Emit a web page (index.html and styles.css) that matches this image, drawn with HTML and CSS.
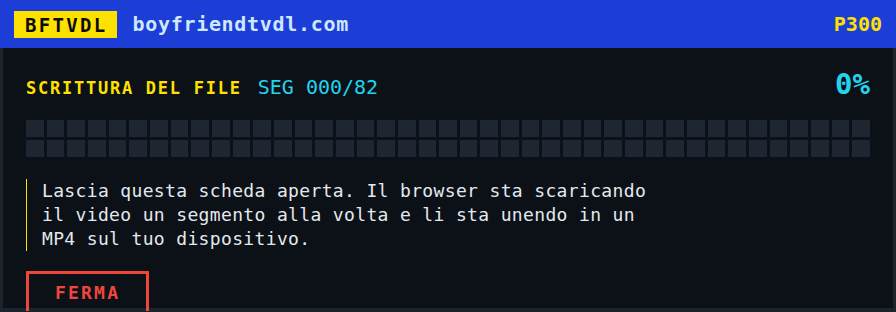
FILE: index.html
```html
<!DOCTYPE html>
<html lang="it">
<head>
<meta charset="utf-8">
<title>BFTVDL</title>
<link rel="stylesheet" href="styles.css">
</head>
<body>
<header class="topbar">
  <div class="brand">
    <span class="badge">BFTVDL</span>
    <span class="domain">boyfriendtvdl.com</span>
  </div>
  <span class="code">P300</span>
</header>
<main class="panel">
  <div class="status">
    <span class="label">SCRITTURA DEL FILE</span>
    <span class="seg">SEG 000/82</span>
    <span class="pct">0%</span>
  </div>
  <div class="segments">
    <i></i><i></i><i></i><i></i><i></i><i></i><i></i><i></i><i></i><i></i>
    <i></i><i></i><i></i><i></i><i></i><i></i><i></i><i></i><i></i><i></i>
    <i></i><i></i><i></i><i></i><i></i><i></i><i></i><i></i><i></i><i></i>
    <i></i><i></i><i></i><i></i><i></i><i></i><i></i><i></i><i></i><i></i>
    <i></i><i></i><i></i><i></i><i></i><i></i><i></i><i></i><i></i><i></i>
    <i></i><i></i><i></i><i></i><i></i><i></i><i></i><i></i><i></i><i></i>
    <i></i><i></i><i></i><i></i><i></i><i></i><i></i><i></i><i></i><i></i>
    <i></i><i></i><i></i><i></i><i></i><i></i><i></i><i></i><i></i><i></i>
    <i></i><i></i>
  </div>
  <p class="note">Lascia questa scheda aperta. Il browser sta scaricando il video un segmento alla volta e li sta unendo in un MP4 sul tuo dispositivo.</p>
  <button class="stop" type="button">FERMA</button>
</main>
</body>
</html>
```

FILE: styles.css
```css
html, body {
  margin: 0;
  padding: 0;
  background: #1b232b;
  font-family: "DejaVu Sans Mono", "Liberation Mono", monospace;
}

.topbar {
  height: 48px;
  box-sizing: border-box;
  padding: 0 14px;
  background: #1c3dd6;
  display: flex;
  align-items: center;
  justify-content: space-between;
}

.brand {
  display: flex;
  align-items: center;
}

.badge {
  display: flex;
  align-items: center;
  height: 27px;
  padding: 0 10px 0 11px;
  margin-top: 1px;
  background: #ffe100;
  color: #0b0b0b;
  font-weight: bold;
  font-size: 19px;
  letter-spacing: 2.3px;
}

.domain {
  margin-left: 15px;
  color: #cde8ff;
  font-weight: bold;
  font-size: 20px;
  letter-spacing: 0.7px;
}

.code {
  color: #ffe100;
  font-weight: bold;
  font-size: 20px;
}

.panel {
  box-sizing: border-box;
  height: 263px;
  border: 3px solid #1b232b;
  border-top: 0;
  background: #0c1017;
  padding: 19px 23px 0;
}

.status {
  display: flex;
  align-items: baseline;
  height: 34px;
}

.label {
  color: #ffe100;
  font-weight: bold;
  font-size: 17px;
  letter-spacing: 1.75px;
}

.seg {
  margin-left: 16px;
  color: #22d3ee;
  font-size: 20px;
}

.pct {
  margin-left: auto;
  color: #22d3ee;
  font-weight: bold;
  font-size: 29px;
  line-height: 34px;
}

.segments {
  margin-top: 19px;
  display: grid;
  grid-template-columns: repeat(41, 1fr);
  grid-auto-rows: 17px;
  gap: 3px;
}

.segments i {
  display: block;
  background: #1e2731;
}

.note {
  margin: 22px 0 0;
  max-width: 620px;
  padding-left: 15px;
  border-left: 1px solid #ffe100;
  color: #e3e9ee;
  font-size: 18px;
  letter-spacing: 0.35px;
  line-height: 24px;
}

.stop {
  display: block;
  margin-top: 20px;
  padding: 7px 26px 12px;
  background: transparent;
  border: 3px solid #ef463c;
  color: #ef463c;
  font-family: inherit;
  font-weight: bold;
  font-size: 18px;
  letter-spacing: 2.2px;
  line-height: 24px;
}
```
